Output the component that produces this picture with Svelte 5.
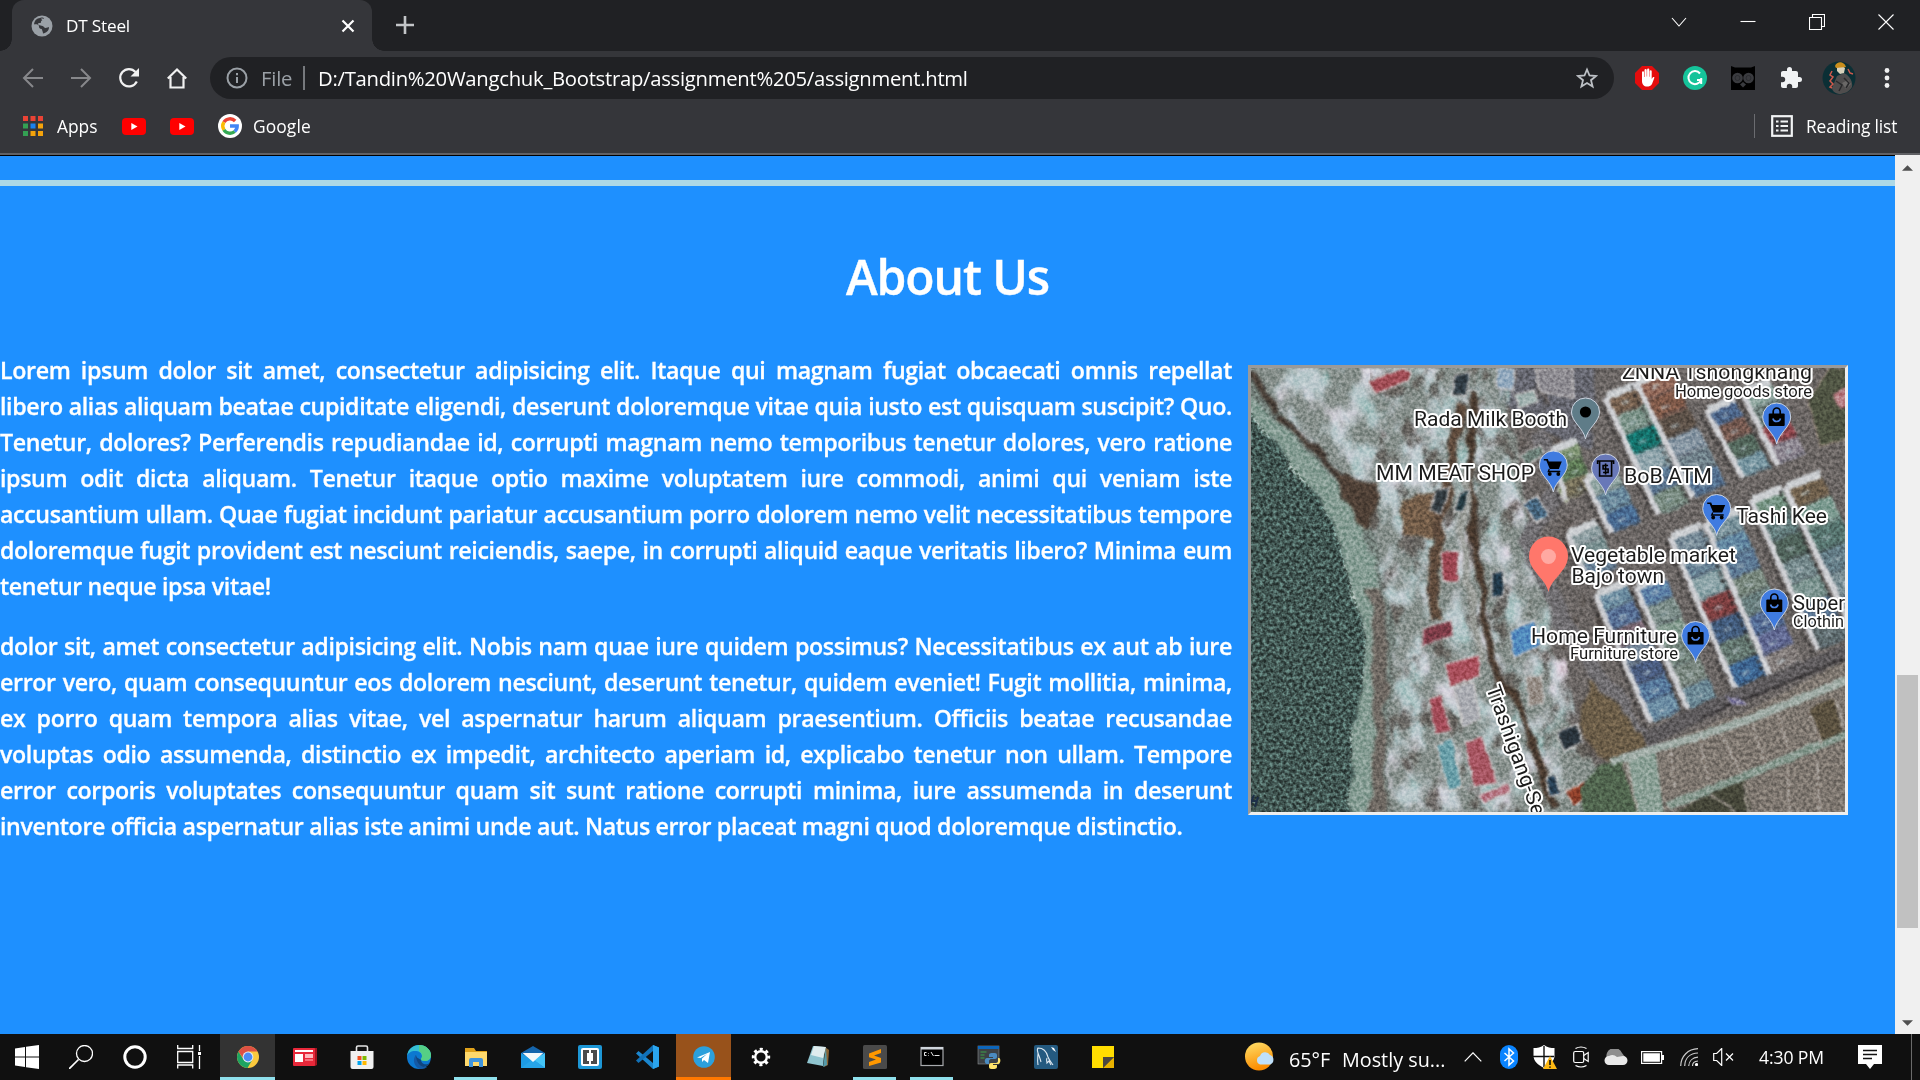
<script>
  const paragraphs = [
    [
      'Lorem ipsum dolor sit amet, consectetur adipisicing elit. Itaque qui magnam fugiat obcaecati omnis repellat',
      'libero alias aliquam beatae cupiditate eligendi, deserunt doloremque vitae quia iusto est quisquam suscipit? Quo.',
      'Tenetur, dolores? Perferendis repudiandae id, corrupti magnam nemo temporibus tenetur dolores, vero ratione',
      'ipsum odit dicta aliquam. Tenetur itaque optio maxime voluptatem iure commodi, animi qui veniam iste',
      'accusantium ullam. Quae fugiat incidunt pariatur accusantium porro dolorem nemo velit necessitatibus tempore',
      'doloremque fugit provident est nesciunt reiciendis, saepe, in corrupti aliquid eaque veritatis libero? Minima eum',
      'tenetur neque ipsa vitae!'
    ],
    [
      'dolor sit, amet consectetur adipisicing elit. Nobis nam quae iure quidem possimus? Necessitatibus ex aut ab iure',
      'error vero, quam consequuntur eos dolorem nesciunt, deserunt tenetur, quidem eveniet! Fugit mollitia, minima,',
      'ex porro quam tempora alias vitae, vel aspernatur harum aliquam praesentium. Officiis beatae recusandae',
      'voluptas odio assumenda, distinctio ex impedit, architecto aperiam id, explicabo tenetur non ullam. Tempore',
      'error corporis voluptates consequuntur quam sit sunt ratione corrupti minima, iure assumenda in deserunt',
      'inventore officia aspernatur alias iste animi unde aut. Natus error placeat magni quod doloremque distinctio.'
    ]
  ];

  const apps = [
    { name: 'chrome', state: 'active' },
    { name: 'news' },
    { name: 'store' },
    { name: 'edge' },
    { name: 'explorer', state: 'open' },
    { name: 'mail' },
    { name: 'brackets' },
    { name: 'vscode' },
    { name: 'telegram', state: 'alert' },
    { name: 'settings' },
    { name: 'notepad' },
    { name: 'sublime', state: 'open' },
    { name: 'cmd', state: 'open' },
    { name: 'python' },
    { name: 'mysql' },
    { name: 'sticky' }
  ];

  // Terraced houses: left edge a-b, depth of the roofs, roof colours.
  const rows = [
    { a: [1607, 397], b: [1661, 515], w: 31, c: ['#75604f', '#7c9389', '#14706a', '#8fa4ab', '#5a7590', '#788a80'] },
    { a: [1638, 382], b: [1695, 498], w: 34, c: ['#8e6657', '#7d5848', '#5b5047', '#8594a1', '#6f8089', '#54708f'] },
    { a: [1708, 410], b: [1745, 478], w: 28, c: ['#4b6488', '#73584f', '#52665b', '#7795a0'] },
    { a: [1744, 392], b: [1780, 465], w: 28, c: ['#8ba39b', '#6d7d79', '#8d454b', '#8d8791'] },
    { a: [1587, 478], b: [1613, 533], w: 30, c: ['#8da29f', '#67869a', '#486a91'] },
    { a: [1672, 537], b: [1737, 688], w: 32, c: ['#748895', '#668194', '#8ba3a7', '#7b3f40', '#425b7b', '#647770', '#3d6591'] },
    { a: [1707, 523], b: [1772, 675], w: 32, c: ['#78919a', '#6286a0', '#5c7893', '#78877d', '#667b7b', '#536b94', '#616992', '#827c7a'] },
    { a: [1753, 500], b: [1820, 650], w: 31, c: ['#72907f', '#627b7b', '#4f625a', '#75898c', '#7b938f', '#526c89', '#5d6a6d'] },
    { a: [1787, 487], b: [1850, 620], w: 36, c: ['#6d5e4b', '#7e9c92', '#56736e', '#627a84', '#7b8e94', '#6b8494'] },
    { a: [1597, 594], b: [1653, 723], w: 31, c: ['#6b8b9f', '#576f94', '#7d6c77', '#6f8094', '#495b7e', '#56779a', '#6b8ca3'] },
    { a: [1638, 587], b: [1690, 710], w: 29, c: ['#5c80a6', '#7a8b87', '#859c90', '#708179', '#7b8881', '#6b8794'] },
    { a: [1569, 533], b: [1590, 580], w: 30, c: ['#8c9c9f', '#7b9192', '#62798f'] },
    { a: [1553, 450], b: [1568, 500], w: 26, c: ['#7b906f', '#5d7955', '#746e59'] }
  ];

  const roofs = rows.flatMap(({ a, b, w, c }) => {
    const dx = (b[0] - a[0]) / c.length;
    const dy = (b[1] - a[1]) / c.length;
    const ox = w * 0.93;
    const oy = -w * 0.38;
    return c.map((fill, i) => {
      const x = a[0] + dx * i;
      const y = a[1] + dy * i;
      return {
        fill,
        points: `${x},${y} ${x + ox},${y + oy} ${x + ox + dx},${y + oy + dy} ${x + dx},${y + dy}`,
        ridge: `M${x + 14} ${y + dy * 0.35}l${ox * 0.25} ${oy * 0.25}`,
        shade: `M${x + dx} ${y + dy - 2}l${ox} ${oy}`
      };
    });
  });

  // Small buildings scattered along the river bank.
  const huts = [
    ['#a04d55', '1368,381 1405,368 1411,373 1409,380 1376,394'],
    ['#303b43', '1455,375 1470,372 1466,396 1453,395'],
    ['#91a8bd', '1497,368 1515,368 1513,391 1497,388'],
    ['#333b40', '1436,490 1450,487 1441,514 1430,510'],
    ['#23383f', '1460,492 1470,489 1463,513 1454,512'],
    ['#9a4550', '1441,552 1458,551 1458,582 1443,582'],
    ['#7b3c47', '1423,628 1452,620 1453,636 1422,646'],
    ['#a84f5b', '1445,664 1479,655 1480,677 1450,686'],
    ['#a9abb1', '1454,687 1474,682 1480,718 1463,728'],
    ['#a04a56', '1429,699 1441,694 1451,731 1435,734'],
    ['#a65561', '1465,742 1482,737 1497,782 1474,788'],
    ['#b47380', '1478,795 1508,784 1511,792 1484,803'],
    ['#6a9fa9', '1436,746 1452,737 1462,787 1449,791'],
    ['#5189bd', '1510,631 1534,620 1541,645 1514,658'],
    ['#46657d', '1523,504 1537,496 1548,515 1537,523'],
    ['#29333b', '1557,733 1577,724 1583,742 1564,751'],
    ['#8e402b', '1565,791 1585,781 1590,795 1574,806'],
    ['#263d50', '1547,778 1555,775 1560,794 1549,796'],
    ['#203747', '1492,573 1503,571 1503,595 1492,598'],
    ['#938a83', '1527,678 1542,675 1543,703 1529,706'],
    ['#697c75', '1520,456 1540,445 1545,453 1528,465'],
    ['#7e8d65', '1556,488 1578,475 1585,486 1565,503'],
    ['#8c8a90', '1535,368 1572,368 1574,398 1540,392'],
    ['#9fb0ae', '1515,395 1534,390 1538,402 1520,408']
  ];

  const places = [
    { t: 'ZNNA Tshongkhang', x: 1622, y: 379, w: 190, s: 20.4 },
    { t: 'Home goods store', x: 1675, y: 396.5, w: 137, s: 16.6 },
    { t: 'Rada Milk Booth', x: 1414, y: 426, w: 153, s: 20.8 },
    { t: 'MM MEAT SHOP', x: 1376, y: 480, w: 158, s: 20.8 },
    { t: 'BoB ATM', x: 1624, y: 482.5, w: 88, s: 20.8 },
    { t: 'Tashi Kee', x: 1736, y: 522.5, w: 91, s: 20.8 },
    { t: 'Vegetable market', x: 1571, y: 561.5, w: 165, s: 20.8 },
    { t: 'Bajo town', x: 1571.5, y: 582.5, w: 92.5, s: 20.8 },
    { t: 'Home Furniture', x: 1531, y: 642.5, w: 146, s: 20.8 },
    { t: 'Furniture store', x: 1570, y: 659, w: 108, s: 16.6 },
    { t: 'Super', x: 1793, y: 609.5, w: 52, s: 20.8 },
    { t: 'Clothin', x: 1793, y: 626.5, w: 51, s: 16.6 }
  ];

  const pins = [
    { x: 1585.5, y: 412, kind: 'dot', fill: '#5f7c88' },
    { x: 1553.3, y: 465, kind: 'cart', fill: '#3f7be0' },
    { x: 1605.6, y: 468, kind: 'atm', fill: '#6878b8' },
    { x: 1776.7, y: 417, kind: 'bag', fill: '#3f7be0' },
    { x: 1716.7, y: 508.5, kind: 'cart', fill: '#3f7be0' },
    { x: 1774.3, y: 603, kind: 'bag', fill: '#3f7be0' },
    { x: 1695.6, y: 635.5, kind: 'bag', fill: '#3f7be0' }
  ];
</script>

{#snippet youtube()}
  <svg class="yt" viewBox="0 0 24 17"><rect width="24" height="17" rx="4" fill="#f00" /><path d="M9.3 5v7l6.2-3.5z" fill="#fff" /></svg>
{/snippet}

{#snippet appIcon(name)}
  <svg class="app-icon" viewBox="0 0 24 24">
    {#if name === 'chrome'}
      <circle cx="12" cy="12" r="11" fill="#fbc93d" />
      <path d="M2.500 6.500A11 11 0 0 0 11.500 23l5-8.500H7.500z" fill="#1da362" />
      <path d="M2.500 6.500A11 11 0 0 1 21.500 6.500H12L7 13z" fill="#dd5144" />
      <circle cx="12" cy="12" r="5.400" fill="#e8edf5" />
      <circle cx="12" cy="12" r="4.400" fill="#4c8bf5" />
    {:else if name === 'news'}
      <path d="M3 3h21v17l-2 1H3z" fill="#a3141f" />
      <rect x="0" y="3" width="22" height="18" rx="1" fill="#e8283a" />
      <path d="M2 5h18v2H2zM2 9h8v8H2z" fill="#fff" /><path d="M12 9h8v4h-8z" fill="#ffb9be" /><path d="M12 14h8v2h-8z" fill="#f5707a" />
    {:else if name === 'store'}
      <path d="M6.500 7V2.500a1.500 1.500 0 0 1 1.500-1.500h8a1.500 1.500 0 0 1 1.500 1.500V7" fill="none" stroke="#e5e5e5" stroke-width="1.600" />
      <path d="M0.500 6h23v16a2 2 0 0 1-2 2h-19a2 2 0 0 1-2-2z" fill="#f1f1f1" />
      <path d="M7.500 11h4v4h-4z" fill="#f25022" /><path d="M12.500 11h4v4h-4z" fill="#7fba00" /><path d="M7.500 16h4v4h-4z" fill="#00a4ef" /><path d="M12.500 16h4v4h-4z" fill="#ffb900" />
    {:else if name === 'edge'}
      <circle cx="12" cy="12" r="12" fill="#0c78d0" />
      <path d="M0 11C1 4 6 0 12 0c7 0 12 5 12 10 0 4-3 6-6 6-3 0-4-1-4-2 0-.5 1-1 1-3 0-3-3-5-7-5-4 0-7 2-8 5z" fill="#35bfd3" />
      <path d="M12 0c7 0 12 5 12 10 0 4-3 6-6 6-3 0-4-1-4-2 0-.5 1-1 1-3 0-2-1-4-3-5z" fill="#55cf85" />
      <path d="M9 10c-3 5 1 12 7 12 2 0 5-1 7-4-5 3-9 0-9-3-.8-1-5-2-5-5z" fill="#10457f" />
      <path d="M9 10c-4 4-2 12 4 14 4 0 6-1 7-2-6 1-11-4-11-12z" fill="#1459a5" />
    {:else if name === 'explorer'}
      <path d="M1 3h9l2 3h11v15H1z" fill="#e0a21b" /><path d="M1 7h22v14H1z" fill="#ffd96c" />
      <path d="M5 22v-7a2 2 0 0 1 2-2h10a2 2 0 0 1 2 2v7h-4v-5H9v5z" fill="#3f94dd" />
    {:else if name === 'mail'}
      <path d="M0 8 12 1l12 7v15H0z" fill="#1565ac" /><path d="M2 8h20l-10 10z" fill="#f5f8fa" /><path d="M0 8l24 15H0z" fill="#1d9be4" /><path d="M24 8v15L12 15z" fill="#44c4f7" /><path d="M0 23 12 14l12 9z" fill="#26a4e8" /><path d="M2 8h20l-10 9z" fill="#f5f8fa" />
    {:else if name === 'brackets'}
      <rect width="24" height="24" rx="2" fill="#1d97d6" /><rect x="3" y="3" width="18" height="18" rx="2" fill="#fff" />
      <path d="M5 5h6v3H9v8h2v3H5zM13 5h6v14h-6v-3h2V8h-2z" fill="#4b4b4b" />
    {:else if name === 'vscode'}
      <path d="M18 0l6 2.500v19L18 24 1 8.500 3.500 6 18 18z" fill="#1b86ce" /><path d="M18 0v6L3.500 18 1 15.500z" fill="#1171b8" /><path d="M18 0l6 2.500v19L18 24z" fill="#2aa5ef" />
    {:else if name === 'telegram'}
      <circle cx="12" cy="12" r="10.800" fill="#2ba0dc" /><path d="M5 12.500 18 7l-2 11-4-3-2 2v-3.500l5-4.500-6.500 4z" fill="#fff" />
    {:else if name === 'settings'}
      <circle cx="12" cy="12" r="5.800" fill="none" stroke="#fff" stroke-width="2.400" />
      <circle cx="12" cy="12" r="7.700" fill="none" stroke="#fff" stroke-width="3" stroke-dasharray="3 3.047" stroke-dashoffset="1.500" />
    {:else if name === 'notepad'}
      <path d="M19 2l4 3-1 15-4 2z" fill="#8a6232" /><path d="M7 1l12 1-2 19-16-3z" fill="#8fc4cf" /><path d="M8 1l12 1-3 11-12-3z" fill="#dfecee" /><path d="M20 2l1 18-4 2z" fill="#549aa9" />
    {:else if name === 'sublime'}
      <rect width="24" height="24" rx="1.500" fill="#4a4a4a" /><path d="M6 8.500 18 4v4l-7 2.500 7 2.500v4.500L6 21v-4l7-2.500-7-2.200z" fill="#ff9800" />
    {:else if name === 'cmd'}
      <rect x="1" y="2.500" width="22" height="18" fill="#000" stroke="#a7a9ac" stroke-width="1.200" /><path d="M1 2h22v2.500H1z" fill="#cfd5dc" /><path d="M6.500 7.500h-2v3h2M8.500 8v.6M8.500 10v.6M11 7l2.500 4M14.500 10.500h5" fill="none" stroke="#e8e8e8" />
    {:else if name === 'python'}
      <rect x="1" y="1" width="21" height="18" fill="#3d4145" stroke="#8c8f92" stroke-width=".6" /><path d="M1 1h21v3H1z" fill="#0d66bb" /><path d="M3.500 7h6M3.500 10h4M3.500 13h4" stroke="#3da34a" stroke-width="1.200" />
      <path d="M16 8c-4 0-4 1-4 3v1h4v1h-6c-3 0-3 6 0 6h2v-3c0-1 1-2 2-2h4c1 0 2-1 2-2v-2c0-2-2-2-4-2z" fill="#4b8bc0" />
      <path d="M16 24c4 0 4-1 4-3v-1h-4v-1h5c3 0 3-6 1-6h-1v3c0 1-1 2-2 2h-5c-1 0-2 1-2 2v2c0 2 2 2 4 2z" fill="#ffe36b" />
    {:else if name === 'mysql'}
      <rect width="24" height="24" rx="2" fill="#245a80" /><path d="M4 20c-1-5 0-8 0-12-1-3-1-4 0-5 6 0 9 5 10 9 1 3 3 5 5 8M4 8c1 3 2 5 3 9M13 13c-1 2 0 4 0 5l2-2 2 4" fill="none" stroke="#dfe9f1" stroke-width="1.100" /><path d="M17 2l3 1 2 4-3-2z" fill="#fff" />
    {:else}
      <path d="M1 1h22v11L12 23H1z" fill="#fd0" /><path d="M12 23h11V12z" fill="#e9b200" /><path d="M12 23V12h11z" fill="#4b4740" />
    {/if}
  </svg>
{/snippet}

<div class="screen">
  <header class="browser">
    <div class="tabstrip">
      <div class="tab">
        <svg class="favicon" viewBox="0 0 22 22"><circle cx="11" cy="11" r="10.500" fill="#9aa0a6" /><path d="M9 3c3-1 4 0 4 1s-3 1-3 3-3 0-3 2 5 1 6 3 4 0 5 0c0 4-3 6-6 6.500 0-2-1-3-1-4s-3 0-3-3-5-2-5-2C3.500 5 6 3.500 9 3z" fill="#35363a" /><path d="M10 3.500c2 0 3 0 4 1l-2 2z" fill="#9aa0a6" /></svg>
        <span class="tab-title">DT Steel</span>
        <svg class="tab-close" viewBox="0 0 14 14"><path d="M1.500 1.500l11 11M12.500 1.500l-11 11" stroke="#fff" stroke-width="2.200" /></svg>
        <i class="foot left"></i><i class="foot right"></i>
      </div>
      <svg class="new-tab" viewBox="0 0 18 18"><path d="M9 0v18M0 9h18" stroke="#c3c5c8" stroke-width="2.600" /></svg>
      <div class="window-buttons">
        <svg viewBox="0 0 16 16"><path d="M1 4l7 8 7-8" /></svg>
        <svg viewBox="0 0 16 16"><path d="M.5 7.500h15" /></svg>
        <svg viewBox="0 0 16 16"><path d="M.5 3.500h12v12H.5zM3.500 3.500v-3h12v12h-3" /></svg>
        <svg viewBox="0 0 16 16"><path d="M.5.5l15 15M15.500.5l-15 15" /></svg>
      </div>
    </div>

    <div class="toolbar">
      <svg class="nav dim" viewBox="0 0 22 22"><path d="M21 11H2M11 2 2 11l9 9" /></svg>
      <svg class="nav dim" viewBox="0 0 22 22"><path d="M1 11h19M11 2l9 9-9 9" /></svg>
      <svg class="nav" viewBox="0 0 22 22"><path d="M18.800 14.500A8.700 8.700 0 1 1 17.500 5" /><path d="M21 1v8.500h-8.500z" fill="#f1f1f1" stroke="none" /></svg>
      <svg class="nav" viewBox="0 0 22 22"><path d="M1.800 11.500 11 2.500l9.200 9M4.500 10v10.500h13V10" /></svg>
      <div class="omnibox">
        <svg class="info" viewBox="0 0 22 22"><circle cx="11" cy="11" r="9.500" /><path d="M11 10v6M11 6v2.200" /></svg>
        <span class="scheme">File</span>
        <span class="url">D:/Tandin%20Wangchuk_Bootstrap/assignment%205/assignment.html</span>
        <svg class="star" viewBox="0 0 22 22"><path d="M11 2.500l2.500 6 6.500.5-5 4.200 1.600 6.300L11 16l-5.600 3.500L7 13.200 2 9l6.500-.5z" /></svg>
      </div>
      <div class="extensions">
        <svg viewBox="0 0 24 24"><path d="M7 0h10l7 7v10l-7 7H7l-7-7V7z" fill="#e40d0d" /><path d="M7 11V6.200a1 1 0 0 1 2 0V11h.5V4.200a1.100 1.100 0 0 1 2.200 0V10.500h.4V3.700a1.100 1.100 0 0 1 2.200 0v7h.4V5.200a1 1 0 0 1 2 0V13l1-1.500c1-1 2-.3 1.600.5L17 18c-1 2-3 2.500-5 2.500-3 0-5-2-5-5.500z" fill="#fff" /></svg>
        <svg viewBox="0 0 24 24"><circle cx="12" cy="12" r="12" fill="#15c39a" /><path d="M17 7.500A6.500 6.500 0 1 0 18 14h-4M18.200 12v6" fill="none" stroke="#fff" stroke-width="2" /></svg>
        <svg viewBox="0 0 24 24"><path d="M0 0l4 1.500h16L24 0v24H0z" fill="#000" /><circle cx="6.500" cy="12" r="5.300" fill="#3a3b3f" /><circle cx="17.500" cy="12" r="5.300" fill="#3a3b3f" /><circle cx="6.500" cy="12" r="2.500" fill="none" stroke="#2b2c30" /><circle cx="17.500" cy="12" r="2.500" fill="none" stroke="#2b2c30" /><path d="M12 16l3 2.500-3 3-3-3z" fill="#3a3b3f" /></svg>
        <svg viewBox="0 0 24 24"><path d="M20.500 11H19V7c0-1.100-.9-2-2-2h-4V3.500a2.500 2.500 0 0 0-5 0V5H4c-1.100 0-2 .9-2 2v3.800h1.500a2.700 2.700 0 0 1 0 5.400H2V20c0 1.100.9 2 2 2h3.800v-1.500a2.700 2.700 0 0 1 5.400 0V22H17c1.100 0 2-.9 2-2v-4h1.500a2.500 2.500 0 0 0 0-5z" fill="#f1f3f4" /></svg>
        <svg class="avatar" viewBox="0 0 34 34"><circle cx="17" cy="17" r="16.500" fill="#0b2f35" /><path d="M15 15l7-3c6 3 9 9 8 14-3 5-8 7-13 7-5-1-7-4-7-6z" fill="#4f4d4d" /><path d="M20 22l6-3 3 4-5 5z" fill="#6a6867" /><path d="M14 20l6 4-3 6M22 17l5 5-3 5" stroke="#29292b" stroke-width="1.500" fill="none" /><path d="M15 6c2-2 6-1 8 1l-1 5-4 1-3-3z" fill="#d9d2bb" /><path d="M13 5c2-5 9-5 11 1l-10 1z" fill="#c98e1c" /><path d="M10 10l-2 4 3 2-3 4 3 3-3 3 2 1M26 8l2 4 3 1" stroke="#d05a4c" stroke-width="1.500" fill="none" /></svg>
        <svg viewBox="0 0 24 24"><circle cx="12" cy="4.500" r="2.400" fill="#f1f1f1" /><circle cx="12" cy="12" r="2.400" fill="#f1f1f1" /><circle cx="12" cy="19.500" r="2.400" fill="#f1f1f1" /></svg>
      </div>
    </div>

    <nav class="bookmarks">
      <svg class="grid-icon" viewBox="0 0 20 20">
        <path d="M0 0h5v5H0zM7.500 0h5v5h-5zM15 0h5v5h-5z" fill="#ea4335" /><path d="M0 7.500h5v5H0zM0 15h5v5H0z" fill="#34a053" /><path d="M7.500 7.500h5v5h-5z" fill="#1a82f0" /><path d="M15 7.500h5v5h-5zM7.500 15h5v5h-5zM15 15h5v5h-5z" fill="#f4a30b" />
      </svg>
      <span class="bm apps">Apps</span>
      {@render youtube()}
      {@render youtube()}
      <svg class="google" viewBox="0 0 24 24">
        <circle cx="12" cy="12" r="12" fill="#fff" />
        <g fill="none" stroke-width="3.400"><path d="M17.200 7A7.200 7.200 0 0 0 5.900 8.200" stroke="#ea4335" /><path d="M5.900 8.200a7.200 7.200 0 0 0 0 7.600" stroke="#fbbc05" /><path d="M5.900 15.800a7.200 7.200 0 0 0 10.800 1.700" stroke="#34a853" /><path d="M16.700 17.500A7.200 7.200 0 0 0 19.200 12H12" stroke="#4285f4" /></g>
      </svg>
      <span class="bm goog">Google</span>
      <span class="reading">
        <svg viewBox="0 0 22 22"><rect x="1.200" y="1.200" width="19.600" height="19.600" fill="none" stroke="#f1f3f4" stroke-width="2.200" /><path d="M5 6.500h2.500M5 11h2.500M5 15.500h2.500M9.500 6.500H17M9.500 11H17M9.500 15.500H17" stroke="#f1f3f4" stroke-width="2.200" /></svg>
        <span class="bm rl">Reading list</span>
      </span>
    </nav>
  </header>

  <div class="viewport">
    <main>
      <div class="rule"></div>
      <h1>About Us</h1>
      <div class="about">
        <div class="copy">
          {#each paragraphs as lines}
            <p>
              {#each lines as line, i}
                <span class:last={i === lines.length - 1}>{line}</span>
              {/each}
            </p>
          {/each}
        </div>
        <div class="map">
          <svg viewBox="1251 368 594 444">
            <defs>
              <filter id="rough" x="0" y="0" width="100%" height="100%" color-interpolation-filters="sRGB"><feTurbulence type="fractalNoise" baseFrequency=".035" numOctaves="3" seed="4" /><feDisplacementMap in="SourceGraphic" scale="16" xChannelSelector="R" yChannelSelector="G" /><feGaussianBlur stdDeviation="1.600" /></filter>
              <filter id="soft" x="0" y="0" width="100%" height="100%" color-interpolation-filters="sRGB"><feTurbulence type="fractalNoise" baseFrequency=".12" numOctaves="2" seed="9" /><feDisplacementMap in="SourceGraphic" scale="3.500" xChannelSelector="R" yChannelSelector="G" /><feGaussianBlur stdDeviation=".9" /></filter>
              <filter id="snow" x="0" y="0" width="100%" height="100%" color-interpolation-filters="sRGB"><feTurbulence type="fractalNoise" baseFrequency=".04 .028" numOctaves="5" seed="12" /><feColorMatrix values="0 0 .5 0 .52  0 0 .2 0 .72  0 0 .3 0 .69  4.500 0 0 0 -1.850" /><feComposite in2="SourceGraphic" operator="in" /><feGaussianBlur stdDeviation=".8" /></filter>
              <filter id="dirt" x="0" y="0" width="100%" height="100%" color-interpolation-filters="sRGB"><feTurbulence type="fractalNoise" baseFrequency=".045 .03" numOctaves="4" seed="31" /><feColorMatrix values="0 0 0 0 .33  0 0 0 0 .30  0 0 0 0 .28  0 6 0 0 -3.300" /><feComposite in2="SourceGraphic" operator="in" /><feGaussianBlur stdDeviation=".8" /></filter>
              <filter id="grain" x="0" y="0" width="100%" height="100%" color-interpolation-filters="sRGB"><feTurbulence type="fractalNoise" baseFrequency=".3" numOctaves="2" seed="7" /><feColorMatrix values="2 0 0 0 -.5  2 0 0 0 -.5  2 0 0 0 -.5  0 0 0 0 1" /><feComposite in2="SourceGraphic" operator="in" /></filter>
            </defs>
            <g filter="url(#rough)">
              <rect x="1220" y="340" width="660" height="500" fill="#858e8a" />
              <path d="M1490 340h390v340l-280 90-40-60-20-160z" fill="#6b6664" />
              <path d="M1500 340h95v110l-50-20-45-30z" fill="#65666f" />
            </g>
            <path d="M1270 368h240v100l50 160 20 110-20 74h-190l10-190-60-130-50-60z" fill="#fff" filter="url(#snow)" opacity=".9" />
            <path d="M1370 368h170l60 200 10 244h-240z" fill="#fff" filter="url(#dirt)" opacity=".75" />
            <g filter="url(#rough)">
              <path d="M1240 370l40 36 55 68 40 60 18 90-5 200h-20l4-190-20-80-40-70-72-100z" fill="#717d78" />
              <path d="M1245 392l50 45 42 45 25 45 18 50 4 40-10 80 0 150h-40l-20-320-69-90z" fill="#859c93" />
              <path d="M1230 395l46 49 31 39 26 40 11 38 12 38 10 38-3 44-10 40-4 120h-119z" fill="#415652" />
              <path d="M1252 372c10 22 20 28 26 40M1278 415l36 32 25 28" stroke="#443a33" stroke-width="7" fill="none" />
              <path d="M1335 473l44 10-8 45-14-4z" fill="#4e4036" />
              <path d="M1376 590q8 80 1 232" stroke="#6e6862" stroke-width="14" fill="none" />
              <path d="M1400 500l38-8 4 50-42-10z" fill="#735d49" />
              <path d="M1476 390q-10 60 0 150t18 130l30 40 30 100" stroke="#48392e" stroke-width="7" fill="none" />
              <path d="M1462 405q-20 90-28 160v60" stroke="#5c493b" stroke-width="11" fill="none" />
              <path d="M1468 470q-12 90 14 190" stroke="#999c97" stroke-width="8" fill="none" />
              <path d="M1536 430l22 60-30 50 40 90 90 130" stroke="#6f6d70" stroke-width="17" fill="none" />
              <path d="M1590 680l60 62-40 20-30-25z" fill="#6b5d48" />
            </g>
            <g filter="url(#soft)">
              <g stroke="#c9c5c4" stroke-width="1.400">
                {#each huts as [fill, points]}<polygon {points} {fill} />{/each}
              </g>
              {#each roofs as r}
                <polygon points={r.points} fill={r.fill} />
                <path d={r.shade} stroke="#4a5058" stroke-width="1.400" opacity=".5" />
                <path d={r.ridge} stroke="#b7c6cc" stroke-width="4" opacity=".45" />
              {/each}
              {#each rows as r}
                <path d="M{r.a[0] - 2} {r.a[1]}L{r.b[0] - 2} {r.b[1]}" stroke="#d0d1d5" stroke-width="5.500" />
                <path d="M{r.a[0] - 7} {r.a[1] + 4}L{r.b[0] - 7} {r.b[1] + 4}" stroke="#2d2b2b" stroke-width="2" stroke-dasharray="5 3" />
                <path d="M{r.a[0]} {r.a[1]}l{r.w * 0.93} {-r.w * 0.38}" stroke="#cccfd2" stroke-width="8" />
              {/each}
              <path d="M1830 368h20v70l-30 8-12-46z" fill="#4f5443" stroke="#a79488" /><path d="M1832 395l20-12v22l-12 4z" fill="#b77e83" />
            </g>
            <g filter="url(#soft)">
              <path d="M1600 768l60-24 90-34 100-52v170h-270z" fill="#7d766f" />
              <path d="M1600 765l20-7 20 64h-55l-5-34z" fill="#50644e" />
              <path d="M1625 760l30-12 10 74h-26z" fill="#8ba096" />
              <path d="M1645 740l70-34 145-60" stroke="#5d5a5c" stroke-width="15" fill="none" /><path d="M1700 718l150-62" stroke="#322f30" stroke-width="2" />
              <path d="M1610 762l90-26 50-17 110-44" stroke="#a0aca6" stroke-width="8" fill="none" />
              <path d="M1668 806l60-23 130-54" stroke="#87998f" stroke-width="8" fill="none" />
              <path d="M1810 708l24-9 8 34-20 8z" fill="#59503f" /><path d="M1660 822l50-29 35-13 8 42z" fill="#454639" />
              <path d="M1670 748l5 40M1700 738l8 42M1722 736l20 38M1752 724l14 40M1808 710l14 34M1778 714l10 36M1627 762l10 50M1788 772l2 50M1817 760l3 62M1710 794l26 18M1744 784l6 38M1836 700l8 28" stroke="#a59d96" stroke-width="2" />
              <path d="M1725 696l12 3-2-4 12 10-14-1 2 3z" fill="#8783a5" />
            </g>
            <rect class="grain" x="1251" y="368" width="594" height="444" filter="url(#grain)" />
            <path class="grain water" d="M1251 412l25 32 31 39 26 40 11 38 12 38 10 38-3 44-10 40-4 91h-98z" filter="url(#grain)" />

            {#each pins as p}
              <g transform="translate({p.x} {p.y})">
                <path d="M0 27C-2 16-14 10-14 0a14 14 0 0 1 28 0c0 10-12 16-14 27z" fill={p.fill} stroke="#cbd3df" stroke-width="1" />
                {#if p.kind === 'dot'}
                  <circle r="5.600" />
                {:else if p.kind === 'cart'}
                  <path d="M-9.500-6h4l1 2.500h13L5.500 4h-9l-3.500-8.500h-2.500z" /><path d="M-4 4l-1 2.500h12" fill="none" stroke="#000" stroke-width="1.300" /><circle cx="-3.500" cy="9" r="1.900" /><circle cx="5" cy="9" r="1.900" />
                {:else if p.kind === 'bag'}
                  <rect x="-8" y="-3.500" width="16" height="12.500" rx="1" /><path d="M-3.500-3v-2.500a3.500 3.500 0 0 1 7 0V-3" fill="none" stroke="#000" stroke-width="1.700" /><path d="M-3.800 1.500a3.900 3.900 0 0 0 7.600 0" fill="none" stroke="#4b84e6" stroke-width="1.600" />
                {:else}
                  <path d="M-8-4v-3H8v3M-6-6.500V8H6V-6.500M2.500-2.500h-5V1h5v3.500h-5M0-4.500v11" fill="none" stroke="#000" stroke-width="1.600" />
                {/if}
              </g>
            {/each}
            <path d="M1548.500 592c-3-14-19.500-21-19.500-36a19.500 19.500 0 0 1 39 0c0 15-16.500 22-19.500 36z" fill="#ff776b" /><circle cx="1548.500" cy="556.500" r="7.500" fill="#ffa9a2" />
            <g class="labels">
              {#each places as l}
                <text x={l.x} y={l.y} font-size={l.s} textLength={l.w} lengthAdjust="spacingAndGlyphs">{l.t}</text>
              {/each}
              <text font-size="20.500" textLength="137" lengthAdjust="spacingAndGlyphs" transform="translate(1486 688) rotate(70)">Trashigang-Se</text>
            </g>
            <path d="M1250 805l4-10M1255 807l3-10M1252 801h5" stroke="#1d2f48" stroke-width="2" />
          </svg>
        </div>
      </div>
    </main>
    <div class="scrollbar">
      <svg viewBox="0 0 12 6"><path d="M0 6l6-6 6 6z" /></svg>
      <div class="thumb"></div>
      <svg viewBox="0 0 12 6"><path d="M0 0l6 6 6-6z" /></svg>
    </div>
  </div>

  <footer class="taskbar">
    <div class="system">
      <svg viewBox="0 0 24 24"><path d="M0 3.500 10 2v9.400H0zM11 1.800 24 0v11.400H11zM0 12.400h10V22L0 20.500zM11 12.400h13V24l-13-1.800z" fill="#fff" stroke="none" /></svg>
      <svg viewBox="0 0 24 24"><circle cx="15.500" cy="8.500" r="8" /><path d="M9.500 14.500 0 24" stroke-width="1.700" /></svg>
      <svg viewBox="0 0 24 24"><circle cx="12" cy="12" r="10.200" stroke-width="3" /></svg>
      <svg viewBox="0 0 24 24"><path d="M.7 0v3.500h15V0M.7 6.500h15v11h-15zM.7 23.500v-3.500h15v3.500M22.500 0v6M22.500 11v13" stroke-width="1.300" /><path d="M21 7h3v3h-3z" fill="#fff" stroke="none" /></svg>
    </div>
    <div class="apps-row">
      {#each apps as app}
        <div class="app {app.state ?? ''}">{@render appIcon(app.name)}</div>
      {/each}
    </div>
    <div class="tray">
      <svg class="weather" viewBox="0 0 30 30"><defs><linearGradient id="sun" x2="0.300" y2="1"><stop stop-color="#ffe16b" /><stop offset="1" stop-color="#fb8c00" /></linearGradient></defs><circle cx="14" cy="14.500" r="14" fill="url(#sun)" /><path d="M15 22.500a4.500 4.500 0 0 1 0-8.500 5.500 5.500 0 0 1 10-1 5 5 0 0 1 0 9.500z" fill="#bfe0fa" /></svg>
      <span class="temp">65°F</span>
      <span class="sky">Mostly su...</span>
      <svg class="up" viewBox="0 0 18 10"><path d="M.7 9.300 9 .8l8.300 8.500" /></svg>
      <svg class="bt" viewBox="0 0 18 24"><rect width="18" height="24" rx="9" fill="#0a84ff" stroke="none" /><path d="M4.500 8l9 8L9 20V4l4.500 4-9 8" stroke-width="1.500" /></svg>
      <svg class="shield" viewBox="0 0 24 24"><path d="M11 0c3 2.500 7 3 10.500 3v8c0 5-5 9-10.500 12C5 20 .5 16 .5 11V3C4 3 8 2.500 11 0z" fill="#fff" stroke="none" /><path d="M11 1v21M0 11.500h21" stroke="#101010" stroke-width="1.400" /><path d="M17 11l7 13H10z" fill="#fdb913" stroke="none" /><path d="M17 15v5M17 21.500v1.300" stroke="#111" stroke-width="1.600" /></svg>
      <svg class="meet" viewBox="0 0 16 22"><rect x=".7" y="5.500" width="10" height="11" rx="1.500" /><path d="M10.700 9.500l4.500-3v9l-4.500-3M2.500 2.500q5.500-3 11 0M2.500 19.500q5.500 3 11 0" /></svg>
      <svg class="cloud" viewBox="0 0 24 16"><path d="M3 10a8 8 0 0 1 15-6l3 4-8 4z" fill="#8f8f8f" stroke="none" /><path d="M5 16a4.500 4.500 0 0 1 0-9 7 7 0 0 1 8 1l6-1a4.500 4.500 0 0 1 0 9z" fill="#e9e9e9" stroke="none" /></svg>
      <svg class="battery" viewBox="0 0 23 13"><rect x=".6" y=".6" width="20" height="11.800" /><path d="M2.300 2.300h16.600v8.400H2.300zM21 4h2v5h-2z" fill="#fff" stroke="none" /></svg>
      <svg class="wifi" viewBox="0 0 18 18"><path d="M.7 18C1 8 8 1 18 .7M4.700 18C5 10 10 5.200 18 5M8.700 18c.3-5 4-8.500 9.300-8.800M12.500 18c0-3 2.500-4.800 5.500-5" stroke="#ccc" /><circle cx="16.500" cy="16.500" r="1.600" fill="#fff" stroke="none" /></svg>
      <svg class="mute" viewBox="0 0 21 18"><path d="M.7 5.500h3l5-5v17l-5-5h-3zM13 5.500l7 7M20 5.500l-7 7" /></svg>
      <span class="clock">4:30 PM</span>
      <svg class="notes" viewBox="0 0 24 24"><path d="M0 0h24v19h-8l-4 5-4-5H0z" fill="#fff" stroke="none" /><path d="M5 5.500h14M5 9.500h14M5 13.500h9" stroke="#111" stroke-width="1.500" /></svg>
      <i class="desktop"></i>
    </div>
  </footer>
</div>

<style>
  :global(body) { margin: 0; overflow: hidden; }
  svg { display: block; flex: none; }
  .screen { width: 1920px; height: 1080px; display: flex; flex-direction: column; overflow: hidden; font-family: 'Open Sans', 'Noto Sans', sans-serif; color: #fff; }
  .browser { height: 156px; box-sizing: border-box; background: #35363a; border-bottom: 1px solid #000; box-shadow: inset 0 -2px #606165; display: flex; flex-direction: column; }
  .tabstrip { height: 51px; background: #202124; display: flex; padding-left: 12px; }
  .tab { position: relative; width: 360px; height: 51px; box-sizing: border-box; background: #35363a; border-radius: 12px 12px 0 0; display: flex; align-items: center; padding: 0 17px 0 19px; }
  .foot { position: absolute; bottom: 0; width: 12px; height: 12px; background: radial-gradient(circle at 0 0, #202124 11.5px, #35363a 12px); }
  .foot.left { left: -12px; }
  .foot.right { right: -12px; background: radial-gradient(circle at 100% 0, #202124 11.5px, #35363a 12px); }
  .favicon { width: 22px; height: 22px; margin-right: 13px; }
  .tab-title { font-size: 17.2px; flex: 1; white-space: nowrap; letter-spacing: -0.2px; padding-bottom: 1px; }
  .tab-close { width: 14px; height: 14px; }
  .new-tab { width: 18px; height: 18px; margin: 16px 0 0 24px; }
  .window-buttons { margin-left: auto; display: flex; gap: 53px; padding: 14px 26px 0 0; }
  .window-buttons svg { width: 16px; height: 16px; fill: none; stroke: #fff; stroke-width: 1.1; }
  .toolbar { height: 54px; display: flex; align-items: center; padding: 0 21px 0 22px; }
  .nav { width: 22px; height: 22px; margin-right: 26px; fill: none; stroke: #f1f1f1; stroke-width: 2.2; }
  .nav.dim { stroke: #87888b; stroke-width: 2; }
  .omnibox { width: 1404px; height: 42px; box-sizing: border-box; margin-left: -4px; border-radius: 21px; background: #202124; display: flex; align-items: center; padding: 0 16px; font-size: 20.3px; }
  .info { width: 22px; height: 22px; fill: none; stroke: #9aa0a6; stroke-width: 2; }
  .scheme { color: #9aa0a6; margin-left: 13px; width: 42px; border-right: 2px solid #76797d; line-height: 24px; letter-spacing: -0.2px; }
  .url { margin-left: 13px; letter-spacing: -0.28px; white-space: nowrap; flex: 1; }
  .star { width: 22px; height: 22px; fill: none; stroke: #bdc1c6; stroke-width: 1.8; }
  .extensions { display: flex; align-items: center; gap: 24px; margin-left: 21px; }
  .extensions svg { width: 24px; height: 24px; }
  .extensions .avatar { width: 34px; height: 34px; margin: 0 -5px; }
  .bookmarks { height: 42px; display: flex; align-items: center; padding: 0 22px 0 23px; }
  .bm { font-size: 17.4px; white-space: nowrap; padding-bottom: 1px; letter-spacing: -0.05px; }
  .grid-icon { width: 20px; height: 20px; }
  .apps { margin-left: 14px; width: 65px; }
  .yt { width: 24px; height: 17px; margin-right: 24px; }
  .google { width: 24px; height: 24px; }
  .goog { margin-left: 11px; letter-spacing: 0.1px; }
  .reading { margin-left: auto; display: flex; align-items: center; height: 24px; border-left: 1px solid #6b6c70; padding-left: 16px; }
  .reading svg { width: 22px; height: 22px; }
  .rl { margin-left: 13px; width: 92px; letter-spacing: -0.15px; }
  .viewport { height: 878px; display: flex; background: #1e90ff; }
  main { width: 1895px; overflow: hidden; padding-top: 24px; box-sizing: border-box; }
  .rule { height: 6px; background: #add8e6; }
  h1 { margin: 61px 0 0; font-size: 48px; line-height: 60px; font-weight: 600; text-align: center; letter-spacing: -1.1px; -webkit-text-stroke: 0.4px #fff; }
  .about { display: flex; margin-top: 45px; }
  .copy { width: 1232px; }
  p { margin: 0 0 24px; font-size: 23.2px; line-height: 36px; font-weight: 600; letter-spacing: -0.37px; -webkit-text-stroke: 0.3px #fff; }
  p span { display: block; text-align: justify; text-align-last: justify; white-space: nowrap; }
  p .last { text-align-last: left; }
  .map { margin: 13px 0 0 16px; width: 594px; height: 444px; border: 3px solid; border-color: #9a9a9a #eee #eee #9a9a9a; overflow: hidden; }
  .map svg { width: 594px; height: 444px; }
  .grain { mix-blend-mode: overlay; opacity: 0.25; }
  .grain.water { opacity: 0.35; }
  .labels { font-family: Roboto, sans-serif; fill: #1b1b1b; stroke: #fff; stroke-width: 4px; stroke-linejoin: round; paint-order: stroke; }
  .scrollbar { width: 25px; margin-top: -1px; background: #f0f0f0; display: flex; flex-direction: column; align-items: center; }
  .scrollbar svg { width: 11px; height: 6px; margin: 10px 0 8px; fill: #505050; }
  .thumb { width: 21px; height: 253px; background: #c1c1c1; margin: 496px 0 auto; }
  .taskbar { height: 46px; background: #101010; display: flex; }
  .system { display: flex; gap: 30px; padding: 11px 19px 0 15px; }
  .system svg { width: 24px; height: 24px; fill: none; stroke: #fff; stroke-width: 1.3; }
  .apps-row { display: flex; gap: 2px; }
  .app { width: 55px; height: 46px; box-sizing: border-box; display: flex; justify-content: center; padding-top: 11px; }
  .app.active { background: #333; border-bottom: 3px solid #8fe0ec; }
  .app.open { background: linear-gradient(#8fe0ec, #8fe0ec) center bottom / 43px 3px no-repeat; }
  .app.alert { background: #98521b; border-bottom: 3px solid #ff7800; }
  .app-icon { width: 24px; height: 24px; }
  .tray { margin-left: auto; display: flex; align-items: center; font-size: 19.8px; white-space: nowrap; width: 675px; }
  .tray svg { fill: none; stroke: #fff; stroke-width: 1.2; }
  .tray .weather { width: 30px; height: 30px; stroke: none; }
  .temp { margin-left: 14px; width: 53px; padding-top: 4px; }
  .sky { width: 122px; padding-top: 4px; }
  .up { width: 18px; height: 10px; margin-right: 18px; }
  .bt { width: 18px; height: 24px; margin-right: 15px; }
  .shield { width: 24px; height: 24px; margin-right: 16px; }
  .meet { width: 16px; height: 22px; margin-right: 15px; }
  .cloud { width: 24px; height: 16px; margin-right: 13px; }
  .battery { width: 23px; height: 13px; margin-right: 16px; }
  .wifi { width: 18px; height: 18px; margin-right: 15px; }
  .mute { width: 21px; height: 18px; }
  .clock { margin-left: 25px; width: 99px; font-size: 17.6px; letter-spacing: -0.1px; }
  .notes { width: 24px; height: 24px; }
  .desktop { width: 1px; height: 46px; margin-left: 29px; background: #6a6a6a; }
</style>
